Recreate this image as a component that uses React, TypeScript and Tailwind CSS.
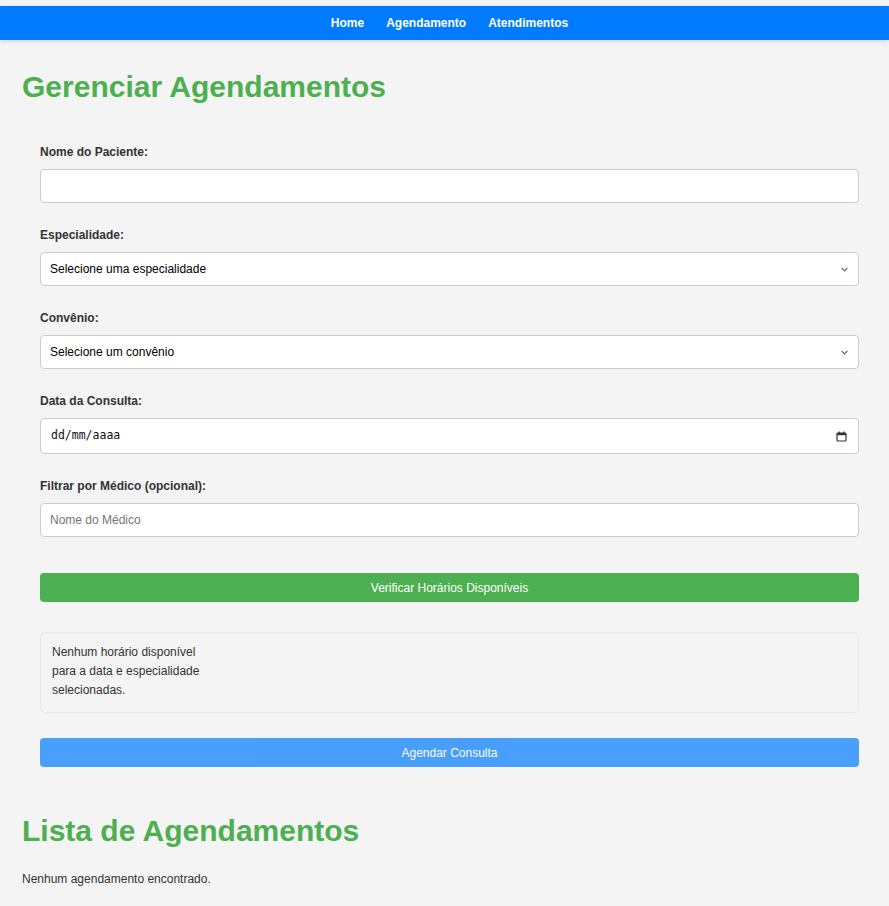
import React from "react";

const fieldBase =
  "block w-full h-[34px] border border-[#cccccc] rounded-[4px] bg-white text-[12px] text-black";

function Label({ children }: { children: React.ReactNode }) {
  return (
    <label className="block mb-[10px] text-[12px] leading-[14px] font-bold text-[#333333]">
      {children}
    </label>
  );
}

function Select({ placeholder }: { placeholder: string }) {
  return (
    <div className="relative">
      <select className={`${fieldBase} appearance-none pl-[9px] pr-[24px]`} defaultValue="">
        <option value="">{placeholder}</option>
      </select>
      {/* seta do select */}
      <svg
        className="absolute right-[11px] top-[15px] pointer-events-none"
        width="7"
        height="5"
        viewBox="0 0 7 5"
      >
        <path d="M0.6 0.8 L3.5 3.8 L6.4 0.8" fill="none" stroke="#666" strokeWidth="1.2" />
      </svg>
    </div>
  );
}

export default function App() {
  return (
    <div className="min-h-screen bg-[#f4f4f4] pt-[6px] pb-[20px] font-['Liberation_Sans',Arial,sans-serif] text-[#333333]">
      {/* Barra de navegação */}
      <nav className="h-[34px] bg-[#007bff] flex items-center justify-center gap-[22px] pl-[10px] shadow-[0_2px_4px_rgba(0,0,0,0.1)]">
        <a className="text-white text-[12px] font-bold">Home</a>
        <a className="text-white text-[12px] font-bold">Agendamento</a>
        <a className="text-white text-[12px] font-bold">Atendimentos</a>
      </nav>

      <main className="px-[22px]">
        <h2 className="mt-[30px] text-[30px] leading-[34px] font-bold text-[#4caf50]">
          Gerenciar Agendamentos
        </h2>

        {/* Formulário */}
        <form className="mt-[41px] pl-[18px] pr-[8px]">
          <div>
            <Label>Nome do Paciente:</Label>
            <input type="text" className={`${fieldBase} px-[9px]`} />
          </div>

          <div className="mt-[25px]">
            <Label>Especialidade:</Label>
            <Select placeholder="Selecione uma especialidade" />
          </div>

          <div className="mt-[25px]">
            <Label>Convênio:</Label>
            <Select placeholder="Selecione um convênio" />
          </div>

          <div className="mt-[25px]">
            <Label>Data da Consulta:</Label>
            <div className="flex items-center justify-between w-full h-[36px] border border-[#cccccc] rounded-[4px] bg-white pl-[10px] pr-[11px]">
              <span className="font-['DejaVu_Sans_Mono',monospace] text-[11.5px] text-[#111111]">
                dd/mm/aaaa
              </span>
              <svg width="11" height="11" viewBox="0 0 11 11">
                <rect x="1" y="2" width="9" height="8" rx="1" fill="none" stroke="#333" strokeWidth="1.2" />
                <rect x="1" y="2" width="9" height="2.2" fill="#333" />
                <rect x="2.6" y="0.5" width="1.2" height="2" fill="#333" />
                <rect x="7.2" y="0.5" width="1.2" height="2" fill="#333" />
              </svg>
            </div>
          </div>

          <div className="mt-[25px]">
            <Label>Filtrar por Médico (opcional):</Label>
            <input
              type="text"
              placeholder="Nome do Médico"
              className={`${fieldBase} px-[9px] placeholder:text-[#757575]`}
            />
          </div>

          <button
            type="button"
            className="mt-[36px] block w-full h-[29px] rounded-[4px] bg-[#4caf50] text-white text-[12px]"
          >
            Verificar Horários Disponíveis
          </button>

          {/* Horários */}
          <div className="mt-[30px] border border-[#e8e8e8] rounded-[5px] pt-[10px] pb-[12px] px-[11px] shadow-[inset_0_1px_1px_rgba(0,0,0,0.02)]">
            <p className="w-[152px] text-[12px] leading-[19px] text-[#333333]">
              Nenhum horário disponível para a data e especialidade selecionadas.
            </p>
          </div>

          <button
            type="button"
            disabled
            className="mt-[25px] block w-full h-[29px] rounded-[4px] bg-[#007bff] opacity-70 text-white text-[12px]"
          >
            Agendar Consulta
          </button>
        </form>

        <h2 className="mt-[47px] text-[30px] leading-[34px] font-bold text-[#4caf50]">
          Lista de Agendamentos
        </h2>
        <p className="mt-[24px] text-[12px] leading-[14px] text-[#333333]">
          Nenhum agendamento encontrado.
        </p>
      </main>
    </div>
  );
}
